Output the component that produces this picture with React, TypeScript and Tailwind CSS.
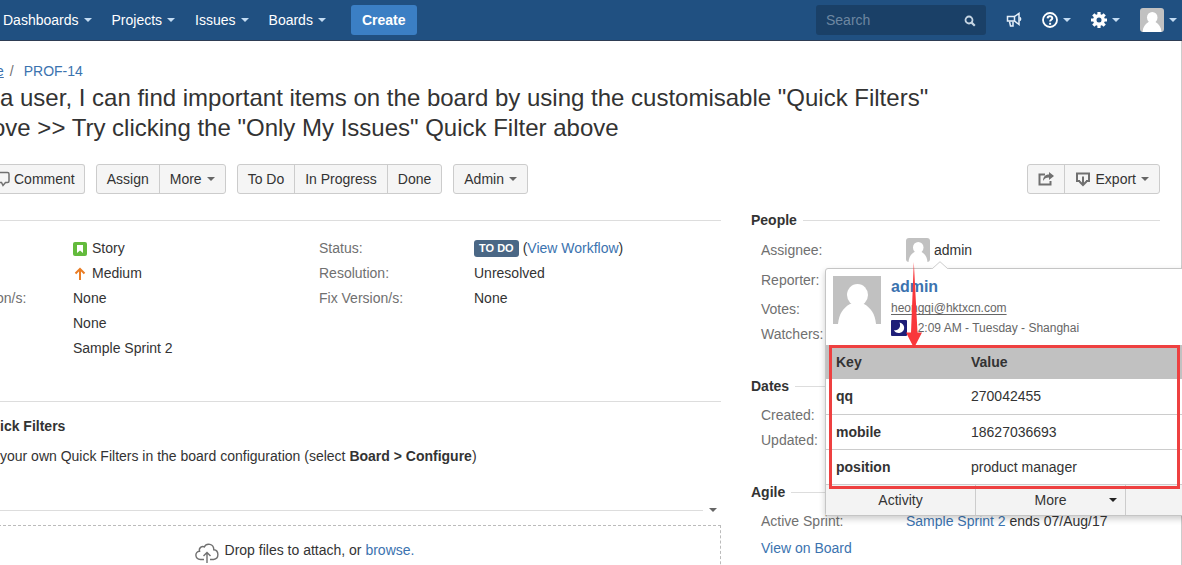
import React from "react";

function Caret({ className = "" }: { className?: string }) {
  return (
    <svg viewBox="0 0 8 4" className={`h-1 w-2 shrink-0 ${className}`} aria-hidden="true">
      <path d="M0 0h8L4 4z" fill="currentColor" />
    </svg>
  );
}

function Avatar({ className }: { className: string }) {
  return (
    <svg viewBox="0 0 48 48" className={`shrink-0 ${className}`} aria-hidden="true">
      <rect width="48" height="48" fill="#c1c1c1" />
      <ellipse cx="24.500" cy="19" rx="10.500" ry="11" fill="#fff" />
      <path d="M5 48c1-10 5-16 12-20h14c7 4 11 10 12 20z" fill="#fff" />
    </svg>
  );
}

function NavItem({ label }: { label: string }) {
  return (
    <a href="#" className="flex items-center gap-[5px] text-white">
      {label}
      <Caret className="text-[#c3dcf3]" />
    </a>
  );
}

function Header() {
  return (
    <header className="flex h-[41px] shrink-0 items-center justify-between border-b border-[#2e3d54] bg-[#205081] text-white">
      <nav className="flex items-center gap-5 pl-[3px]">
        <NavItem label="Dashboards" />
        <NavItem label="Projects" />
        <NavItem label="Issues" />
        <NavItem label="Boards" />
        <button className="ml-[5px] h-[30px] rounded-[3px] bg-[#3b7fc4] px-[11px] font-bold">Create</button>
      </nav>
      <div className="flex items-center gap-5 pr-[5px]">
        <label className="flex h-[30px] w-[170px] items-center rounded-[3px] bg-[#1a4067] px-[10px]">
          <input
            type="text"
            placeholder="Search"
            aria-label="Search"
            className="w-full min-w-0 bg-transparent text-white outline-none placeholder:text-[#6d87a1]"
          />
          <svg viewBox="0 0 12 12" className="mt-0.5 h-3 w-3 shrink-0" fill="none" stroke="#c6d5e3" aria-hidden="true">
            <circle cx="5" cy="5" r="3.500" strokeWidth="1.800" />
            <path d="M7.600 7.600l3.200 3.200" strokeWidth="2.200" />
          </svg>
        </label>
        <button aria-label="Feedback">
          <svg viewBox="0 0 16 16" className="h-4 w-4" fill="none" stroke="#e6f0fa" strokeWidth="1.500" aria-hidden="true">
            <path d="M1.500 4.500h7v4.500h-7z" />
            <path d="M8.500 4.500L13 1.500v11L8.500 9" />
            <path d="M13.500 5.500c1.500.5 1.500 2.500 0 3" />
            <path d="M3.500 9.500l1 4.500h2.500V9.500" />
          </svg>
        </button>
        <button aria-label="Help" className="flex items-center gap-[5px]">
          <svg viewBox="0 0 16 16" className="h-4 w-4" fill="none" stroke="#fff" aria-hidden="true">
            <circle cx="8" cy="8" r="7" strokeWidth="1.800" />
            <path d="M5.600 6.400C5.700 3.600 10.300 3.600 10.300 6.200c0 1.600-2.200 1.600-2.200 3.400" strokeWidth="2" />
            <path d="M8.100 10.800v1.900" strokeWidth="2" />
          </svg>
          <Caret className="text-[#c3dcf3]" />
        </button>
        <button aria-label="Administration" className="flex items-center gap-[5px]">
          <svg viewBox="0 0 16 16" className="h-4 w-4" aria-hidden="true">
            <circle cx="8" cy="8" r="4.200" fill="none" stroke="#fff" strokeWidth="3.400" />
            <path
              d="M8 0v3M8 13v3M0 8h3M13 8h3M2.300 2.300l2.200 2.200M11.500 11.500l2.200 2.200M2.300 13.700l2.200-2.200M11.500 4.500l2.200-2.200"
              stroke="#fff"
              strokeWidth="3.200"
            />
          </svg>
          <Caret className="text-[#c3dcf3]" />
        </button>
        <button aria-label="Profile" className="flex items-center gap-[5px]">
          <Avatar className="h-6 w-6 rounded-[3px]" />
          <Caret className="text-[#c3dcf3]" />
        </button>
      </div>
    </header>
  );
}

function ButtonGroup({ children }: { children: React.ReactNode }) {
  return (
    <div className="flex h-[30px] divide-x divide-[#ccc] overflow-hidden rounded-[3px] border border-[#ccc] bg-[#f5f5f5]">
      {children}
    </div>
  );
}

function ToolButton({ label, caret = false }: { label: string; caret?: boolean }) {
  return (
    <button className="flex items-center gap-[5px] px-[10px]">
      {label}
      {caret && <Caret className="text-[#666]" />}
    </button>
  );
}

function Toolbar() {
  return (
    <div className="mt-[21px] flex items-center justify-between pr-[21px]">
      <div className="flex gap-[11px]">
        <button className="flex h-[30px] items-center gap-1 rounded-r-[3px] border border-l-0 border-[#ccc] bg-[#f5f5f5] pr-[9px]">
          <svg viewBox="0 0 10 16" className="h-4 w-[10px]" fill="none" stroke="#707070" strokeWidth="1.500" aria-hidden="true">
            <path d="M0 1.500h7.500q1.500 0 1.500 1.500v7q0 1.500-1.500 1.500H5.500L3 14.500 1.500 11.500H0" />
          </svg>
          Comment
        </button>
        <ButtonGroup>
          <ToolButton label="Assign" />
          <ToolButton label="More" caret />
        </ButtonGroup>
        <ButtonGroup>
          <ToolButton label="To Do" />
          <ToolButton label="In Progress" />
          <ToolButton label="Done" />
        </ButtonGroup>
        <ButtonGroup>
          <ToolButton label="Admin" caret />
        </ButtonGroup>
      </div>
      <ButtonGroup>
        <button aria-label="Share" className="px-[10px]">
          <svg viewBox="0 0 16 16" className="h-4 w-4" aria-hidden="true">
            <path d="M7 3.500H1.500v10h11V10" fill="none" stroke="#707070" strokeWidth="2" />
            <path d="M11 1l5 4-5 4V6.500C8 6.500 6.500 7.500 5 10c0-4 2-6.500 6-6.500z" fill="#707070" />
          </svg>
        </button>
        <button className="flex items-center gap-[5px] px-[10px]">
          <svg viewBox="0 0 16 16" className="h-4 w-4" fill="none" stroke="#707070" strokeWidth="2" aria-hidden="true">
            <path d="M5 10H2V2.500h12V10h-3" />
            <path d="M8 5.500v8.500M4.500 10.500L8 14l3.500-3.500" />
          </svg>
          Export
          <Caret className="text-[#666]" />
        </button>
      </ButtonGroup>
    </div>
  );
}

function Details() {
  return (
    <div className="mt-[10px] border-t border-[#ddd] pt-[15px]">
      <dl className="grid grid-cols-[73px_246px_155px_1fr] leading-[25px]">
        <dt />
        <dd className="flex items-center gap-[5px]">
          <svg viewBox="0 0 14 14" className="h-[14px] w-[14px]" aria-hidden="true">
            <rect width="14" height="14" rx="2" fill="#63ba3c" />
            <path d="M4 3h6v8L7 8.500 4 11z" fill="#fff" />
          </svg>
          Story
        </dd>
        <dt className="text-[#707070]">Status:</dt>
        <dd>
          <span className="mr-1 inline-block h-[17px] rounded-[3px] bg-[#4a6785] px-[5px] align-[1px] text-[11px] leading-[17px] font-bold text-white">
            TO DO
          </span>
          (<a href="#" className="text-[#3b73af]">View Workflow</a>)
        </dd>
        <dt />
        <dd className="flex items-center gap-[5px]">
          <svg viewBox="0 0 14 14" className="h-[14px] w-[14px]" fill="none" stroke="#ea7d24" strokeWidth="2" aria-hidden="true">
            <path d="M7 13V2.500M2.500 6.500L7 2l4.500 4.500" />
          </svg>
          Medium
        </dd>
        <dt className="text-[#707070]">Resolution:</dt>
        <dd>Unresolved</dd>
        <dt className="-ml-1 text-[#707070]">on/s:</dt>
        <dd>None</dd>
        <dt className="text-[#707070]">Fix Version/s:</dt>
        <dd>None</dd>
        <dt />
        <dd className="col-span-3">None</dd>
        <dt />
        <dd className="col-span-3">Sample Sprint 2</dd>
      </dl>
    </div>
  );
}

function Description() {
  return (
    <section className="mt-10 border-t border-[#ddd] pt-[14px]">
      <h2 className="font-bold">ick Filters</h2>
      <p className="mt-[10px]">
        your own Quick Filters in the board configuration (select <b>Board &gt; Configure</b>)
      </p>
    </section>
  );
}

function Attachments() {
  return (
    <section className="mt-[34px]">
      <div className="flex h-5 items-center gap-[6px] pr-1">
        <div className="h-px flex-1 bg-[#ddd]" />
        <button aria-label="Attachment options" className="flex">
          <Caret className="text-[#666]" />
        </button>
      </div>
      <div className="mt-[5px] -ml-28 flex items-start justify-center gap-1.5 border border-dashed border-[#bbb] pt-[14px] pb-5">
        <svg viewBox="0 0 24 22" className="mt-0.5 h-[22px] w-6" fill="none" stroke="#707070" strokeWidth="1.400" aria-hidden="true">
          <path d="M9 17.500H5.500C-.5 17-.5 9.500 4.500 9.300 3.500 5.500 7.500 3.500 9.300 5 11.500.500 18.800 1.500 18.800 7.800c5.200.400 5.800 9-.3 9.700H15" />
          <path d="M12 21V11M8.500 14L12 10.500l3.500 3.500" />
        </svg>
        <p>
          Drop files to attach, or <a href="#" className="text-[#3b73af]">browse.</a>
        </p>
      </div>
    </section>
  );
}

function SideHeading({ title }: { title: string }) {
  return (
    <div className="flex items-center gap-[6px]">
      <h2 className="font-bold">{title}</h2>
      <div className="h-px flex-1 bg-[#ddd]" />
    </div>
  );
}

const properties = [
  ["qq", "270042455"],
  ["mobile", "18627036693"],
  ["position", "product manager"],
];

function HoverCard() {
  return (
    <div className="absolute top-[58px] left-[74px] w-[452px] rounded-[3px] border border-[#c5c5c5] bg-white shadow-[0_3px_6px_rgba(0,0,0,0.2)]">
      <svg viewBox="0 0 18 9" className="absolute -top-2 left-[105px] h-[9px] w-[18px]" aria-hidden="true">
        <path d="M0 9L9 .5 18 9z" fill="#fff" />
        <path d="M0 7.500h1.500L9 .700l7.500 6.800H18" fill="none" stroke="#ccc" />
      </svg>
      <div className="flex gap-[10px] p-[7px]">
        <Avatar className="h-12 w-12" />
        <div>
          <h3 className="text-base leading-[22px] font-bold text-[#3b73af]">admin</h3>
          <a href="#" className="block w-fit text-xs leading-5 text-[#666] underline underline-offset-2">heongqi@hktxcn.com</a>
          <p className="flex h-5 items-center gap-1 text-xs text-[#666]">
            <svg viewBox="0 0 16 16" className="h-4 w-4" aria-hidden="true">
              <rect width="16" height="16" rx="1" fill="#1e1e78" />
              <path d="M8.500 2.500c6 1.200 6.500 9.500 0 10.500-2.500.300-5-.8-5.500-3 4 1.500 7.500-3 5.500-7.500z" fill="#fff" />
            </svg>
            12:09 AM - Tuesday - Shanghai
          </p>
        </div>
      </div>
      <table className="w-full border-collapse text-left">
        <thead>
          <tr className="h-[34px] bg-[#c1c1c1]">
            <th className="w-[135px] pl-[10px]">Key</th>
            <th className="pl-[10px]">Value</th>
          </tr>
        </thead>
        <tbody>
          {properties.map(([key, value]) => (
            <tr key={key} className="h-[35px] border-b border-[#ccc]">
              <th className="pl-[10px]">{key}</th>
              <td className="pl-[10px]">{value}</td>
            </tr>
          ))}
        </tbody>
      </table>
      <div className="grid h-[30px] grid-cols-3 divide-x divide-[#ccc] bg-[#f3f3f3]">
        <button>Activity</button>
        <button className="flex items-center justify-between px-2 before:w-2">
          More
          <Caret className="text-[#222]" />
        </button>
        <div />
      </div>
      <div className="pointer-events-none absolute top-[76px] left-[3px] h-[144px] w-[351px] border-[3px] border-[#ee4040]" />
      <svg viewBox="0 0 18 86" className="pointer-events-none absolute -top-[7px] left-[79px] h-[86px] w-[18px]" aria-hidden="true">
        <path d="M8.800 0L12.500 70.500H17L9 86 1 70.500H6z" fill="#f9373b" />
      </svg>
    </div>
  );
}

function Sidebar() {
  return (
    <aside className="relative w-[409px] shrink-0">
      <SideHeading title="People" />
      <dl className="mt-[5px] grid grid-cols-[145px_1fr] pl-[10px] text-[#707070]">
        <dt className="leading-[30px]">Assignee:</dt>
        <dd className="flex items-center gap-1 text-[#333]">
          <Avatar className="h-6 w-6 rounded-[3px]" />
          admin
        </dd>
        <dt className="col-span-2 leading-[30px]">Reporter:</dt>
        <dt className="col-span-2 mt-0.5 leading-[25px]">Votes:</dt>
        <dt className="col-span-2 leading-[25px]">Watchers:</dt>
      </dl>
      <div className="mt-[29px]">
        <SideHeading title="Dates" />
        <dl className="mt-[7px] pl-[10px] leading-[25px] text-[#707070]">
          <dt>Created:</dt>
          <dt>Updated:</dt>
        </dl>
      </div>
      <div className="mt-[29px]">
        <SideHeading title="Agile" />
        <dl className="mt-[7px] grid grid-cols-[145px_1fr] pl-[10px] leading-[25px]">
          <dt className="text-[#707070]">Active Sprint:</dt>
          <dd>
            <a href="#" className="text-[#3b73af]">Sample Sprint 2</a> ends 07/Aug/17
          </dd>
        </dl>
        <a href="#" className="mt-0.5 block pl-[10px] leading-[25px] text-[#3b73af]">View on Board</a>
      </div>
      <HoverCard />
    </aside>
  );
}

export default function App() {
  return (
    <div className="flex h-screen flex-col overflow-hidden bg-white font-['Liberation_Sans',Arial,sans-serif] text-sm text-[#333]">
      <Header />
      <main className="flex-1 border-r border-[#ccc]">
        <nav className="mt-5 -ml-1 flex gap-[6px] text-[#3b73af]" aria-label="Breadcrumb">
          <a href="#" className="underline">e</a>
          <span className="text-[#707070]">/</span>
          <a href="#" className="ml-1">PROF-14</a>
        </nav>
        <h1 className="mt-0.5 text-2xl leading-[30px]">
          a user, I can find important items on the board by using the customisable "Quick Filters"
          <span className="-ml-2 block">ove &gt;&gt; Try clicking the "Only My Issues" Quick Filter above</span>
        </h1>
        <Toolbar />
        <div className="mt-4 flex gap-[30px] pr-[21px]">
          <div className="min-w-0 flex-1">
            <Details />
            <Description />
            <Attachments />
          </div>
          <Sidebar />
        </div>
      </main>
    </div>
  );
}
